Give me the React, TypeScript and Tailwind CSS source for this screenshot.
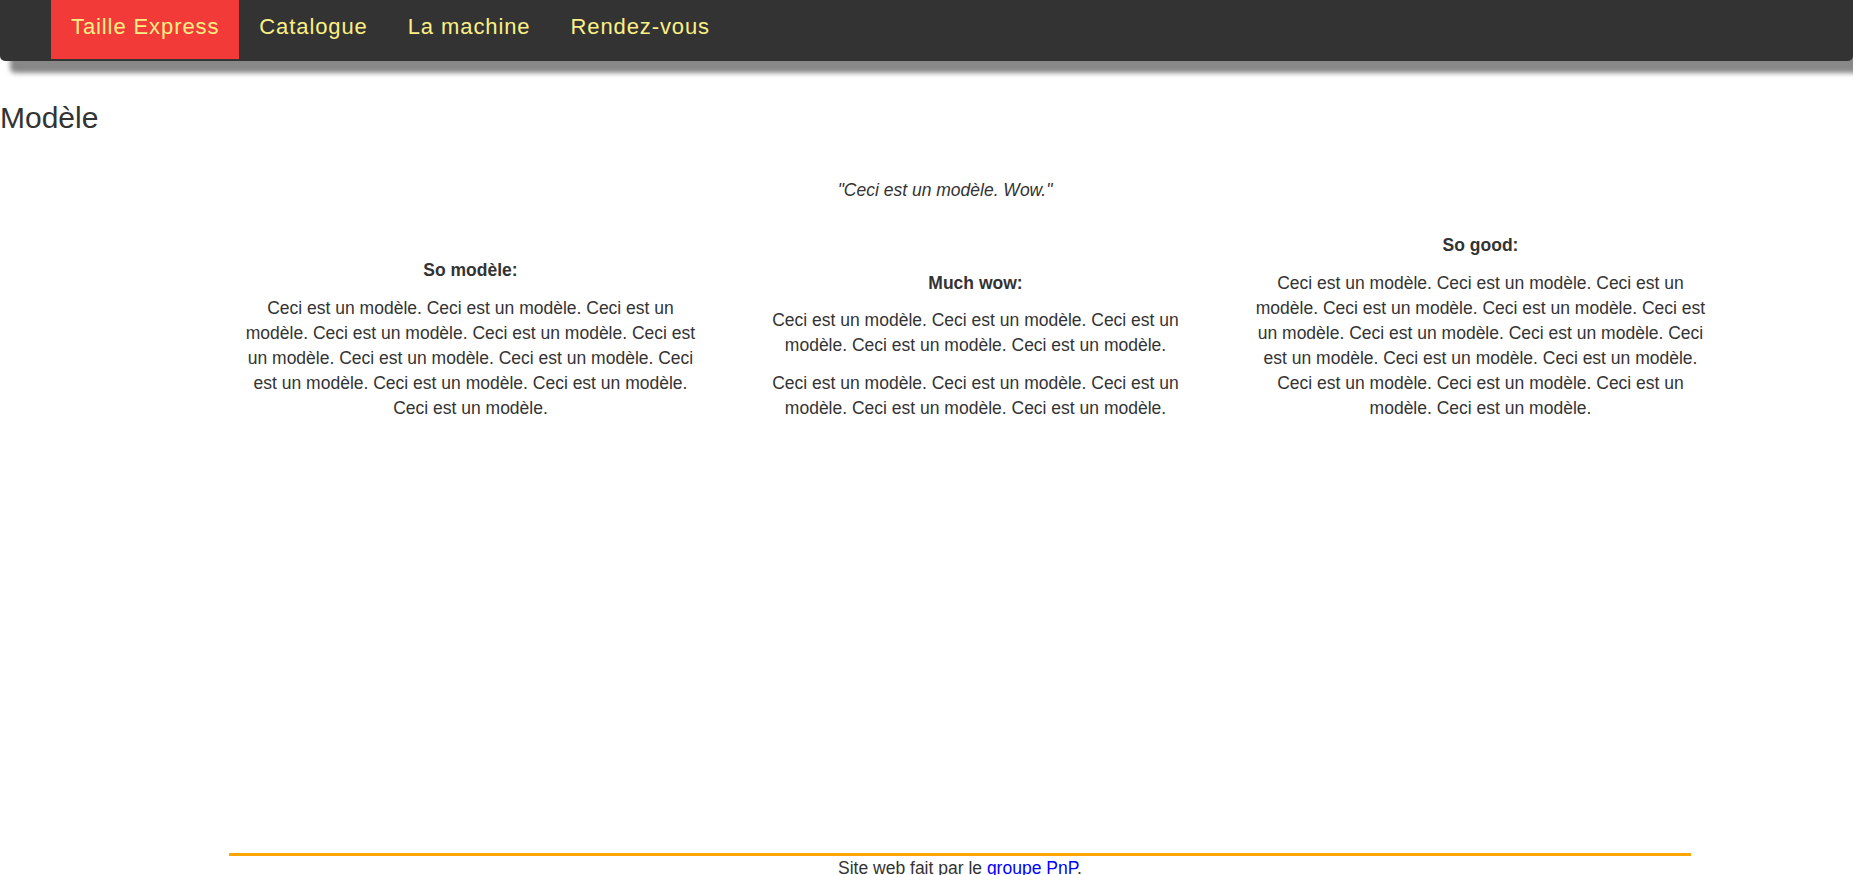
const links = ['Taille Express', 'Catalogue', 'La machine', 'Rendez-vous'];

const filler = 'Ceci est un modèle. ';

const columns = [
  { title: 'So modèle:', paras: [filler.repeat(12).trim()] },
  { title: 'Much wow:', paras: [filler.repeat(5).trim(), filler.repeat(5).trim()] },
  { title: 'So good:', paras: [filler.repeat(15).trim()] }
];

export default function App() {
  return (
    <div className="min-h-screen bg-white text-[#333] font-['Liberation_Sans',Arial,sans-serif] text-[17.5px] leading-[25px]">
      <nav className="h-[61px] bg-[#333] rounded-b-[5px] shadow-[10px_12px_5px_#888]">
        <ul className="flex pl-[51px]">
          {links.map((l, i) => (
            <li
              key={l}
              className={`h-[59px] px-5 pt-[14px] text-[22px] leading-[25px] tracking-[0.9px] text-[#fbf086] ${i === 0 ? 'bg-[#f23a38]' : ''}`}
            >
              {l}
            </li>
          ))}
        </ul>
      </nav>

      <h3 className="mt-[40px] text-[30px] leading-[33px]">Modèle</h3>

      <p className="mt-[44px] pl-[37px] text-center italic">"Ceci est un modèle. Wow."</p>

      <div className="ml-[218px] w-[1515px] mt-[30px] grid grid-cols-3 items-end">
        {columns.map((c) => (
          <div key={c.title} className="px-[22px] text-center flex flex-col gap-[12.5px]">
            <p className="font-bold">{c.title}</p>
            {c.paras.map((p, i) => (
              <p key={i}>{p}</p>
            ))}
          </div>
        ))}
      </div>

      <footer className="ml-[229px] w-[1462px] mt-[432px] border-t-[3px] border-[#ffa500] text-center">
        Site web fait par le <a href="#" className="text-[#0000ff]">groupe PnP</a>.
      </footer>
    </div>
  );
}
